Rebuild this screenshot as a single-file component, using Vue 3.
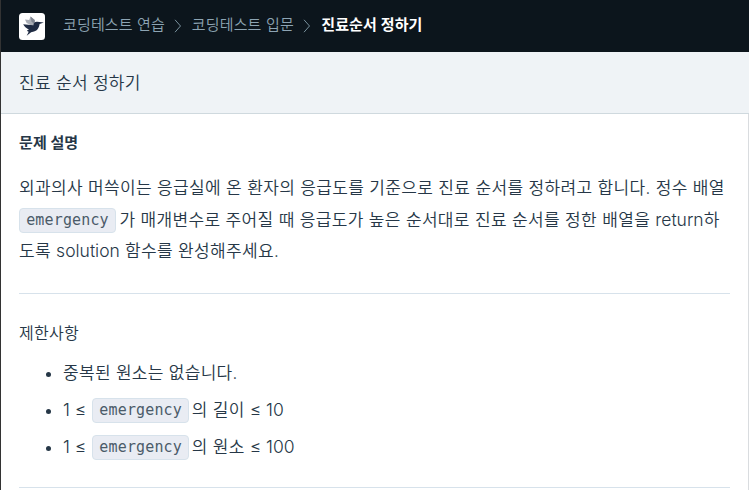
<script setup>
const crumbs = ['코딩테스트 연습', '코딩테스트 입문']
</script>

<template>
  <div class="page">
    <header class="nav">
      <svg class="logo" viewBox="0 0 26 27" width="26" height="27">
        <rect width="26" height="27" rx="3.5" fill="#fff" />
        <path d="M6 6.6 10.2 7l1.3-3.5 4.2 3.4v4.6l-3 1L7.6 10z" fill="#a9adb5" />
        <path d="M11.5 3.5 15.7 6.9v4.6l-3.2-3z" fill="#7f8591" />
        <path d="M4.2 11.2 14.4 12.3C14.6 9.6 16 8.4 18.2 8.7L24.8 9.6 20.6 10.9C19.9 14.8 18.6 17.4 15 18.4L12.1 19.2 7.7 22.8 9.7 18.7C8.7 18.4 8.3 17.9 8.1 17.2L10 16.5C7.2 15.3 5.2 13.4 4.2 11.2z" fill="#1f2b43" />
      </svg>
      <nav class="crumbs">
        <template v-for="c in crumbs" :key="c">
          <a class="crumb">{{ c }}</a>
          <svg class="chev" width="8" height="14" viewBox="0 0 8 14"><path d="M1 .8 6.5 7 1 13.2" fill="none" stroke="#78909c" stroke-width="1" /></svg>
        </template>
        <span class="current">진료순서 정하기</span>
      </nav>
    </header>
    <div class="title">진료 순서 정하기</div>
    <main class="body">
      <h6>문제 설명</h6>
      <p>외과의사 머쓱이는 응급실에 온 환자의 응급도를 기준으로 진료 순서를 정하려고 합니다. 정수 배열<br><code>emergency</code>가 매개변수로 주어질 때 응급도가 높은 순서대로 진료 순서를 정한 배열을 <span class="en">return</span>하<br>도록 <span class="en">solution</span> 함수를 완성해주세요.</p>
      <hr>
      <h5>제한사항</h5>
      <ul>
        <li>중복된 원소는 없습니다.</li>
        <li><span class="en">1 ≤ </span><code>emergency</code>의 길이 <span class="en">≤ 10</span></li>
        <li><span class="en">1 ≤ </span><code>emergency</code>의 원소 <span class="en">≤ 100</span></li>
      </ul>
      <hr class="last">
    </main>
  </div>
</template>

<style>
body { margin: 0; overflow: hidden; }
</style>

<style scoped>
.page {
  box-sizing: border-box;
  height: 490px;
  overflow: hidden;
  border-left: 1px solid #333;
  background: #fff;
  color: #263747;
  font-family: Inter, "Noto Sans CJK KR", sans-serif;
  font-weight: 350;
}
.nav {
  box-sizing: border-box;
  height: 52px;
  display: flex;
  align-items: center;
  padding-left: 18px;
  background: #0c151c;
}
.logo { margin-right: 18px; }
.crumbs { display: flex; align-items: center; font-size: 15px; line-height: 22px; letter-spacing: 0.15px; padding-bottom: 3px; }
.crumb { color: #8da4b3; white-space: nowrap; }
.chev { margin: 3px 9.4px 0 9.4px; }
.current { margin-left: 0.6px; color: #fff; font-weight: 700; white-space: nowrap; }
.title {
  box-sizing: border-box;
  height: 62px;
  padding-left: 18px;
  border-bottom: 1px solid #cfd9de;
  background: #eff3f6;
  font-size: 17px;
  line-height: 62px;
  letter-spacing: 0.3px;
}
.body {
  box-sizing: border-box;
  height: 376px;
  padding: 17px 18px 0;
  border-right: 1px solid #d9dcdf;
}
h6 { margin: 0; font-size: 15px; line-height: 24px; font-weight: 700; letter-spacing: 0.1px; }
p { margin: 18px 0 0; font-size: 17px; line-height: 31.6px; letter-spacing: 0.34px; white-space: nowrap; }
.en { font-size: 17.5px; line-height: 1; letter-spacing: 0; }
code {
  display: inline-block;
  box-sizing: border-box;
  width: 97px;
  height: 25px;
  margin-right: 3.5px;
  border: 1px solid #d7e2eb;
  border-radius: 4px;
  background: #e9ecf3;
  color: #4b5b69;
  font: 400 15px/23px "DejaVu Sans Mono", monospace;
  letter-spacing: 0.15px;
  text-align: center;
  vertical-align: middle;
}
hr { height: 1px; margin: 25px 0 0; border: 0; background: #d7e2eb; }
h5 { margin: 27px 0 0; font-size: 16px; line-height: 24px; font-weight: 350; letter-spacing: 0.3px; }
ul { margin: 10px 0 0; padding-left: 44px; font-size: 17px; line-height: 37px; letter-spacing: 0.3px; }
li { height: 37px; white-space: nowrap; }
li code { margin: -1px 2.5px 1px 1px; }
hr.last { margin-top: 21px; }
</style>
